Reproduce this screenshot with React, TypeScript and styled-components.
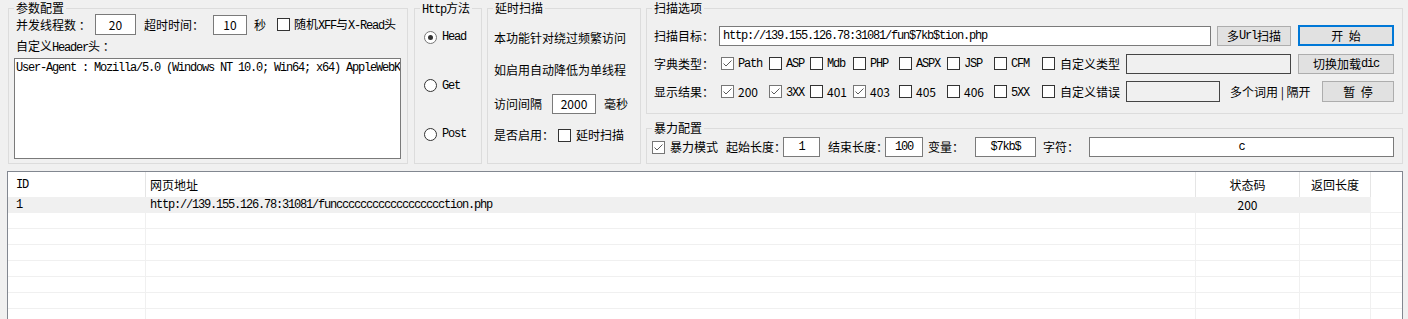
import React from 'react';
import styled, { createGlobalStyle, css } from 'styled-components';

const SANS = '"Noto Sans CJK SC", "Microsoft YaHei", sans-serif';
const MONO = '"Liberation Mono", "Noto Sans CJK SC", monospace';

const GlobalStyle = createGlobalStyle`
  html, body {
    margin: 0;
    padding: 0;
    overflow: hidden;
    background: #f0f0f0;
  }
  body {
    font-family: ${SANS};
    font-size: 12px;
    line-height: 14px;
    color: #000;
  }
`;

const Mono = styled.span`
  font-family: ${MONO};
  font-size: 12px;
  letter-spacing: -1.2px;
`;

const Window = styled.div`
  width: 1408px;
  height: 319px;
  display: flex;
  flex-direction: column;
  overflow: hidden;
`;

const TopArea = styled.div`
  display: flex;
  align-items: flex-start;
  height: 171px;
  padding-left: 8px;
  box-sizing: border-box;
  flex-shrink: 0;
`;

const Column = styled.div<{ $ml: number; $w: number }>`
  display: flex;
  flex-direction: column;
  margin-left: ${p => p.$ml}px;
  width: ${p => p.$w}px;
`;

const GroupBox = styled.div<{ $w?: number; $h: number; $ml?: number; $mt?: number }>`
  box-sizing: border-box;
  ${p => p.$w !== undefined && css`width: ${p.$w}px;`}
  height: ${p => p.$h}px;
  margin-top: ${p => p.$mt ?? 8}px;
  margin-left: ${p => p.$ml ?? 0}px;
  border: 1px solid #dcdcdc;
  display: flex;
  flex-direction: column;
  flex-shrink: 0;
`;

const GroupTitle = styled.div<{ $ml?: number }>`
  align-self: flex-start;
  margin: -9px 0 0 ${p => p.$ml ?? 5}px;
  padding: 0 2px;
  height: 15px;
  line-height: 15px;
  background: #f0f0f0;
  white-space: nowrap;
`;

const Row = styled.div<{ $h: number; $mt?: number; $pl?: number }>`
  display: flex;
  align-items: center;
  height: ${p => p.$h}px;
  margin-top: ${p => p.$mt ?? 0}px;
  padding-left: ${p => p.$pl ?? 0}px;
  flex-shrink: 0;
`;

const Label = styled.span<{ $w?: number; $ml?: number }>`
  flex-shrink: 0;
  ${p => p.$w !== undefined && css`width: ${p.$w}px;`}
  margin-left: ${p => p.$ml ?? 0}px;
  white-space: nowrap;
  line-height: 14px;
`;

const TextBox = styled.div<{ $w: number; $h?: number; $center?: boolean; $disabled?: boolean; $ml?: number }>`
  box-sizing: border-box;
  flex-shrink: 0;
  width: ${p => p.$w}px;
  height: ${p => p.$h ?? 20}px;
  margin-left: ${p => p.$ml ?? 0}px;
  border: 1px solid ${p => (p.$disabled ? '#454545' : '#7a7a7a')};
  background: ${p => (p.$disabled ? '#f0f0f0' : '#ffffff')};
  display: flex;
  align-items: center;
  justify-content: ${p => (p.$center ? 'center' : 'flex-start')};
  padding: 0 3px;
  overflow: hidden;
  white-space: nowrap;
`;

const TextArea = styled.div`
  box-sizing: border-box;
  width: 387px;
  height: 101px;
  margin: 4px 0 0 5px;
  border: 1px solid #7a7a7a;
  background: #fff;
  padding: 2px 1px;
  overflow: hidden;
  white-space: nowrap;
  font-family: ${MONO};
  font-size: 12px;
  letter-spacing: -1.2px;
  flex-shrink: 0;
`;

const Button = styled.div<{ $w: number; $h?: number; $ml?: number; $primary?: boolean }>`
  box-sizing: border-box;
  flex-shrink: 0;
  width: ${p => p.$w}px;
  height: ${p => p.$h ?? 20}px;
  margin-left: ${p => p.$ml ?? 0}px;
  background: #e1e1e1;
  border: ${p => (p.$primary ? '2px solid #0078d7' : '1px solid #adadad')};
  display: flex;
  align-items: center;
  justify-content: center;
  white-space: nowrap;
`;

const Box = styled.span<{ $checked?: boolean }>`
  box-sizing: border-box;
  flex-shrink: 0;
  width: 13px;
  height: 13px;
  border: 1px solid ${p => (p.$checked ? '#767676' : '#333333')};
  background: #fff;
  display: inline-flex;
  align-items: center;
  justify-content: center;
`;

const Round = styled(Box)`
  border-radius: 50%;
`;

const Dot = styled.span`
  width: 5px;
  height: 5px;
  border-radius: 50%;
  background: #333;
`;

const Item = styled.span<{ $gap?: number }>`
  display: inline-flex;
  align-items: center;
  gap: ${p => p.$gap ?? 4}px;
  white-space: nowrap;
  flex-shrink: 0;
`;

const OptionGrid = styled.div`
  display: grid;
  grid-template-columns: 48px 41px 43px 46px 48px 47px 48px 84px;
  align-items: center;
  flex-shrink: 0;
`;

const RadioList = styled.div`
  display: flex;
  flex-direction: column;
  gap: 34.5px;
  margin-top: 15px;
  padding-left: 9px;
`;

const DelayBody = styled.div`
  display: flex;
  flex-direction: column;
  padding-left: 6px;
`;

/* list view */
const ListView = styled.div`
  box-sizing: border-box;
  margin-left: 7px;
  width: 1396px;
  height: 160px;
  border: 1px solid #828790;
  background: #fff;
  overflow: hidden;
  flex-shrink: 0;
`;

const COLS = '138px 1050px 104px 71px 1fr';

const HeaderRow = styled.div`
  display: grid;
  grid-template-columns: ${COLS};
  height: 25px;
`;

const HeaderCell = styled.div<{ $pl?: number; $center?: boolean; $last?: boolean }>`
  display: flex;
  align-items: center;
  justify-content: ${p => (p.$center ? 'center' : 'flex-start')};
  padding-left: ${p => p.$pl ?? 0}px;
  border-right: ${p => (p.$last ? 'none' : '1px solid #e5e5e5')};
  white-space: nowrap;
`;

const DataRow = styled.div`
  display: grid;
  grid-template-columns: ${COLS};
  height: 16px;
`;

const DataCell = styled.div<{ $pl?: number; $center?: boolean; $shade?: boolean; $last?: boolean }>`
  box-sizing: border-box;
  display: flex;
  align-items: center;
  justify-content: ${p => (p.$center ? 'center' : 'flex-start')};
  padding-left: ${p => p.$pl ?? 0}px;
  background: ${p => (p.$shade ? '#f0f0f0' : '#fff')};
  border-bottom: 1px solid #f0f0f0;
  border-right: ${p => (p.$last ? 'none' : '1px solid #f0f0f0')};
  white-space: nowrap;
  overflow: hidden;
`;

const CheckMark = () => (
  <svg width="11" height="11" viewBox="0 0 11 11">
    <path d="M1.5 5.5 L4 8 L9.5 2.5" fill="none" stroke="#5a5a5a" strokeWidth="1" />
  </svg>
);

const CheckBox = ({ checked }: { checked?: boolean }) => (
  <Box $checked={checked}>{checked && <CheckMark />}</Box>
);

const Radio = ({ checked }: { checked?: boolean }) => (
  <Round $checked={checked}>{checked && <Dot />}</Round>
);

const Check = ({ checked, children, gap }: { checked?: boolean; children: React.ReactNode; gap?: number }) => (
  <Item $gap={gap}>
    <CheckBox checked={checked} />
    {children}
  </Item>
);

const dictTypes: [string, boolean][] = [
  ['Path', true],
  ['ASP', false],
  ['Mdb', false],
  ['PHP', false],
  ['ASPX', false],
  ['JSP', false],
  ['CFM', false],
];

const results: [React.ReactNode, boolean][] = [
  ['200', true],
  [<Mono key="3">3XX</Mono>, true],
  ['401', false],
  ['403', true],
  ['405', false],
  ['406', false],
  [<Mono key="5">5XX</Mono>, false],
];

// only the visible part of the header value, the box clips the rest
const UA = 'User-Agent : Mozilla/5.0 (Windows NT 10.0; Win64; x64) AppleWebKit';

const rows = [
  { id: '1', url: 'http://139.155.126.78:31081/funcccccccccccccccccction.php', code: '200', len: '' },
  ...Array.from({ length: 8 }, () => ({ id: '', url: '', code: '', len: '' })),
];

export default function App() {
  return (
    <Window>
      <GlobalStyle />
      <TopArea>
        <GroupBox $w={400} $h={156}>
          <GroupTitle>参数配置</GroupTitle>
          <Row $h={21} $mt={-1} $pl={7}>
            <Label $w={79}>并发线程数 ：</Label>
            <TextBox $w={41} $h={21} $center>20</TextBox>
            <Label $w={69} $ml={8}>超时时间：</Label>
            <TextBox $w={34} $center>10</TextBox>
            <Label $w={23} $ml={7}>秒</Label>
            <Check>
              <span>
                随机<Mono>XFF</Mono>与<Mono>X-Read</Mono>头
              </span>
            </Check>
          </Row>
          <Row $h={14} $mt={5} $pl={7}>
            <Label>
              自定义<Mono>Header</Mono>头 ：
            </Label>
          </Row>
          <TextArea>{UA}</TextArea>
        </GroupBox>

        <GroupBox $w={68} $h={156} $ml={6}>
          <GroupTitle>
            <Mono>Http</Mono>方法
          </GroupTitle>
          <RadioList>
            {['Head', 'Get', 'Post'].map((m, i) => (
              <Item key={m} $gap={5}>
                <Radio checked={i === 0} />
                <Mono>{m}</Mono>
              </Item>
            ))}
          </RadioList>
        </GroupBox>

        <GroupBox $w={154} $h={156} $ml={5}>
          <GroupTitle>延时扫描</GroupTitle>
          <DelayBody>
            <Row $h={14} $mt={16}>
              <Label>本功能针对绕过频繁访问</Label>
            </Row>
            <Row $h={14} $mt={18}>
              <Label>如启用自动降低为单线程</Label>
            </Row>
            <Row $h={20} $mt={17}>
              <Label $w={58}>访问间隔</Label>
              <TextBox $w={44} $center>2000</TextBox>
              <Label $ml={8}>毫秒</Label>
            </Row>
            <Row $h={14} $mt={14}>
              <Label $w={64}>是否启用：</Label>
              <Check gap={5}>
                <span>延时扫描</span>
              </Check>
            </Row>
          </DelayBody>
        </GroupBox>

        <Column $ml={5} $w={757}>
          <GroupBox $h={106}>
            <GroupTitle $ml={5}>扫描选项</GroupTitle>
            <Row $h={21} $mt={10} $pl={7}>
              <Label $w={65}>扫描目标：</Label>
              <TextBox $w={492}>
                <Mono>http://139.155.126.78:31081/fun$7kb$tion.php</Mono>
              </TextBox>
              <Button $w={74} $ml={6}>
                多<Mono>Url</Mono>扫描
              </Button>
              <Button $w={96} $h={21} $ml={7} $primary>
                开{'\u00a0\u00a0'}始
              </Button>
            </Row>
            <Row $h={21} $mt={7} $pl={7}>
              <Label $w={67}>字典类型：</Label>
              <OptionGrid>
                {dictTypes.map(([t, c]) => (
                  <Check key={t} checked={c}>
                    <Mono>{t}</Mono>
                  </Check>
                ))}
                <Check gap={5}>
                  <span>自定义类型</span>
                </Check>
              </OptionGrid>
              <TextBox $w={165} $disabled />
              <Button $w={96} $ml={7}>
                切换加载<Mono>dic</Mono>
              </Button>
            </Row>
            <Row $h={21} $mt={7} $pl={7}>
              <Label $w={67}>显示结果：</Label>
              <OptionGrid>
                {results.map(([t, c], i) => (
                  <Check key={i} checked={c}>
                    <span>{t}</span>
                  </Check>
                ))}
                <Check gap={5}>
                  <span>自定义错误</span>
                </Check>
              </OptionGrid>
              <TextBox $w={94} $h={21} $disabled />
              <Label $w={92} $ml={10}>多个词用 | 隔开</Label>
              <Button $w={72} $h={21}>
                暂{'\u00a0\u00a0'}停
              </Button>
            </Row>
          </GroupBox>

          <GroupBox $h={36} $mt={14}>
            <GroupTitle $ml={5}>暴力配置</GroupTitle>
            <Row $h={20} $mt={2} $pl={5}>
              <Check checked gap={5}>
                <span>暴力模式</span>
              </Check>
              <Label $w={57} $ml={8}>起始长度：</Label>
              <TextBox $w={37} $center>
                <Mono>1</Mono>
              </TextBox>
              <Label $w={57} $ml={8}>结束长度：</Label>
              <TextBox $w={38} $center>
                <Mono>100</Mono>
              </TextBox>
              <Label $w={47} $ml={5}>变量：</Label>
              <TextBox $w={61} $center>
                <Mono>$7kb$</Mono>
              </TextBox>
              <Label $w={46} $ml={7}>字符：</Label>
              <TextBox $w={305} $center>
                <Mono>c</Mono>
              </TextBox>
            </Row>
          </GroupBox>
        </Column>
      </TopArea>

      <ListView>
        <HeaderRow>
          <HeaderCell $pl={8}>
            <Mono>ID</Mono>
          </HeaderCell>
          <HeaderCell $pl={4}>网页地址</HeaderCell>
          <HeaderCell $center>状态码</HeaderCell>
          <HeaderCell $center>返回长度</HeaderCell>
          <HeaderCell $last />
        </HeaderRow>
        {rows.map((r, i) => (
          <DataRow key={i}>
            <DataCell $pl={8} $shade={i === 0}>
              <Mono>{r.id}</Mono>
            </DataCell>
            <DataCell $pl={4} $shade={i === 0}>
              <Mono>{r.url}</Mono>
            </DataCell>
            <DataCell $center $shade={i === 0}>
              {r.code}
            </DataCell>
            <DataCell $center $shade={i === 0}>
              {r.len}
            </DataCell>
            <DataCell $last />
          </DataRow>
        ))}
      </ListView>
    </Window>
  );
}
